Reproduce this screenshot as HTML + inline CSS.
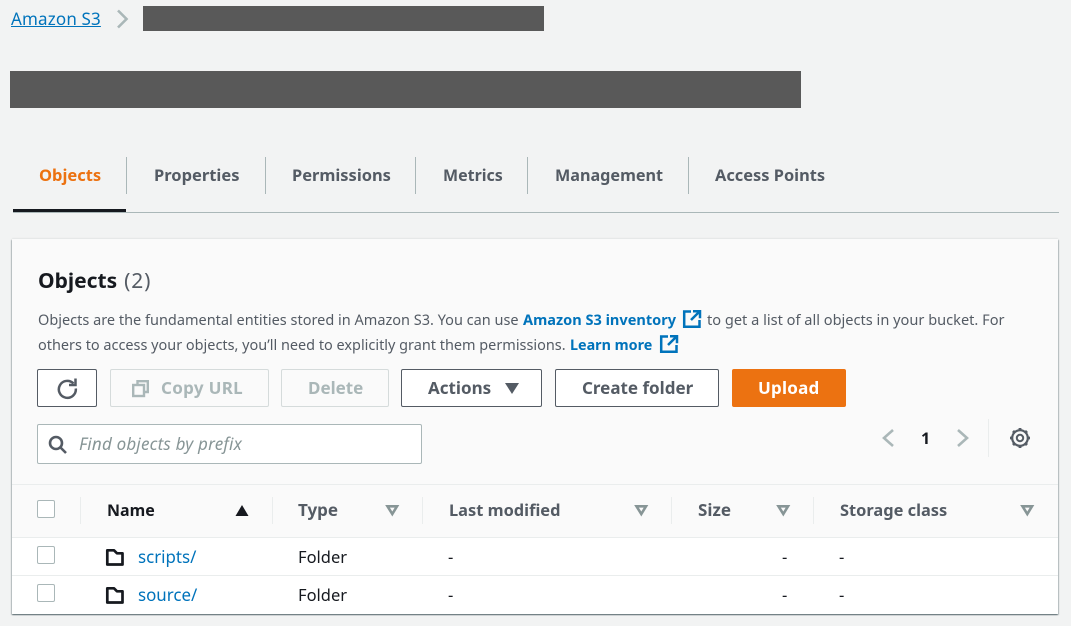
<!DOCTYPE html>
<html lang="en"><head><meta charset="utf-8"><title>Amazon S3</title>
<style>
html,body{margin:0;padding:0}
body{width:1071px;height:626px;background:#f2f3f3;position:relative;overflow:hidden;font-family:"Noto Sans","Open Sans","Liberation Sans","DejaVu Sans",sans-serif;font-size:14.5px;color:#16191f}
.a{position:absolute}
.t{position:absolute;white-space:nowrap;line-height:20px}
.tab{font-weight:700;font-size:16.5px;color:#545b64;top:165px}
.div{position:absolute;width:1px;background:#aab7b8;top:157px;height:37px}
.btn{position:absolute;top:369px;height:38px;box-sizing:border-box;border:1px solid #545b64;border-radius:2px;background:#fff}
.btn.dis{border-color:#d5dbdb;background:#fafafa}
.bl{position:absolute;top:378px;font-weight:700;font-size:17px;color:#545b64;white-space:nowrap;line-height:20px}
.cb{position:absolute;left:37px;width:18px;height:18px;box-sizing:border-box;border:1px solid #aab7b8;border-radius:2px;background:#fff}
.th{position:absolute;top:500px;font-weight:700;font-size:16.5px;color:#545b64;white-space:nowrap;line-height:20px}
.sep{position:absolute;top:497px;height:27px;width:1px;background:#eaeded}
.td{position:absolute;font-size:16.5px;white-space:nowrap;line-height:20px}
.lnk{color:#0073bb;font-size:16.9px}
svg{position:absolute;overflow:visible}
</style></head><body>
<a class="t" style="left:11px;top:9px;font-size:17px;letter-spacing:.15px;color:#0073bb;text-decoration:underline">Amazon S3</a>
<svg style="left:115px;top:9px" width="16" height="20"><path d="M3 1.500l8.500 8.500-8.500 8.500" fill="none" stroke="#aab7b8" stroke-width="2.600"/></svg>
<div class="a" style="left:143px;top:6px;width:401px;height:25px;background:#595959"></div>
<div class="a" style="left:10px;top:71px;width:791px;height:37px;background:#595959"></div>

<div class="t tab" style="left:39px;color:#ec7211">Objects</div>
<div class="t tab" style="left:154px">Properties</div>
<div class="t tab" style="left:292px;font-size:16.45px">Permissions</div>
<div class="t tab" style="left:443px;font-size:16px">Metrics</div>
<div class="t tab" style="left:555px;font-size:16.2px">Management</div>
<div class="t tab" style="left:715px;font-size:16.4px">Access Points</div>
<div class="div" style="left:126px"></div><div class="div" style="left:265px"></div><div class="div" style="left:415px"></div><div class="div" style="left:527px"></div><div class="div" style="left:688px"></div>
<div class="a" style="left:13px;top:209px;width:113px;height:3px;background:#16191f"></div>
<div class="a" style="left:13px;top:212px;width:1046px;height:1px;background:#aab7b8"></div>

<div class="a" style="left:12px;top:239px;width:1046px;height:375px;background:#fafafa;box-shadow:0 1px 1px 0 rgba(0,28,36,.4),1px 1px 1px 0 rgba(0,28,36,.2),-1px 1px 1px 0 rgba(0,28,36,.2),0 -1px 1px rgba(0,28,36,.06)"></div>
<div class="t" style="left:38px;top:269px;font-size:21px;line-height:25px;font-weight:700">Objects<span style="font-weight:400;color:#545b64;letter-spacing:.8px;margin-left:7px">(2)</span></div>
<div class="t" style="left:38px;top:310px;color:#545b64">Objects are the fundamental entities stored in Amazon S3. You can use</div>
<b class="t" style="left:523px;top:310px;color:#0073bb;font-size:14.55px">Amazon S3 inventory</b>
<svg style="left:683px;top:310px" width="18" height="18" fill="none" stroke="#0073bb" stroke-width="2.500"><path d="M8 1.500H1.200v15.300h15.300V10M10 1.200h7v7M16.800 1.200L8 10"/></svg>
<div class="t" style="left:707px;top:310px;color:#545b64;font-size:14.58px">to get a list of all objects in your bucket. For</div>
<div class="t" style="left:38px;top:336px;color:#545b64;font-size:14.46px">others to access your objects, you’ll need to explicitly grant them permissions.</div>
<b class="t" style="left:570px;top:336px;color:#0073bb;font-size:14.35px">Learn more</b>
<svg style="left:660px;top:335px" width="18" height="18" fill="none" stroke="#0073bb" stroke-width="2.500"><path d="M8 1.500H1.200v15.300h15.300V10M10 1.200h7v7M16.800 1.200L8 10"/></svg>

<div class="btn" style="left:37px;width:60px"></div>
<svg style="left:57px;top:378px" width="20" height="20" fill="none" stroke="#545b64" stroke-width="2.500"><path d="M16.500 5.500A8.500 8.500 0 1 0 18.800 10.500"/><path d="M18.500 .5v6.500h-6.500"/></svg>
<div class="btn dis" style="left:110px;width:159px"></div>
<svg style="left:132px;top:380px" width="17" height="17" fill="none" stroke="#aab7b8" stroke-width="2.400"><rect x="1.200" y="5" width="10.800" height="11"/><path d="M5.500 5V1.200h10.300v10.800H12"/></svg>
<div class="bl" style="left:161px;color:#aab7b8;letter-spacing:.3px">Copy URL</div>
<div class="btn dis" style="left:281px;width:108px"></div>
<div class="bl" style="left:308px;color:#aab7b8">Delete</div>
<div class="btn" style="left:401px;width:141px"></div>
<div class="bl" style="left:428px">Actions</div>
<svg style="left:505px;top:383px" width="14" height="11"><path d="M0 0h14L7 11z" fill="#545b64"/></svg>
<div class="btn" style="left:555px;width:164px"></div>
<div class="bl" style="left:582px">Create folder</div>
<div class="btn" style="left:732px;width:114px;background:#ec7211;border-color:#ec7211"></div>
<div class="bl" style="left:758px;color:#fff;letter-spacing:.2px">Upload</div>

<div class="a" style="left:37px;top:424px;width:385px;height:40px;box-sizing:border-box;border:1px solid #aab7b8;border-radius:2px;background:#fff"></div>
<svg style="left:48px;top:435px" width="19" height="19" fill="none" stroke="#545b64" stroke-width="2.600"><circle cx="8" cy="8" r="6"/><path d="M12.500 12.500L18 18"/></svg>
<div class="t" style="left:79px;top:434px;font-size:17px;font-style:italic;color:#879596;letter-spacing:.2px">Find objects by prefix</div>

<svg style="left:881px;top:429px" width="14" height="18" fill="none" stroke="#aab7b8" stroke-width="2.600"><path d="M12 1L3 9l9 8"/></svg>
<div class="t" style="left:921px;top:428px;font-size:16px;font-weight:700">1</div>
<svg style="left:956px;top:429px" width="14" height="18" fill="none" stroke="#aab7b8" stroke-width="2.600"><path d="M2 1l9 8-9 8"/></svg>
<div class="a" style="left:988px;top:419px;width:1px;height:38px;background:#eaeded"></div>
<svg style="left:1010px;top:428px" width="20" height="20" viewBox="0 0 20 20" fill="none" stroke="#545b64"><circle cx="10" cy="10" r="3.200" stroke-width="2"/><circle cx="10" cy="10" r="7.800" stroke-width="2.200"/><path stroke-width="2.800" d="M10 0v2.500M10 17.500V20M0 10h2.500M17.500 10H20M3 3l1.800 1.800M15.200 15.200L17 17M3 17l1.800-1.800M15.200 4.800L17 3"/></svg>

<div class="a" style="left:12px;top:484px;width:1046px;height:1px;background:#eaeded"></div>
<div class="a" style="left:12px;top:537px;width:1046px;height:77px;background:#fff;border-top:1px solid #eaeded;box-sizing:border-box"></div>
<div class="a" style="left:12px;top:575px;width:1046px;height:1px;background:#eaeded"></div>

<div class="cb" style="top:500px"></div><div class="cb" style="top:546px"></div><div class="cb" style="top:584px"></div>
<div class="sep" style="left:80px"></div><div class="sep" style="left:272px"></div><div class="sep" style="left:422px"></div><div class="sep" style="left:671px"></div><div class="sep" style="left:813px"></div>

<div class="th" style="left:107px;color:#16191f;font-size:16px">Name</div>
<svg style="left:235px;top:505px" width="14" height="11"><path d="M7 0l6.500 11H.5z" fill="#16191f"/></svg>
<div class="th" style="left:298px;font-size:17px">Type</div>
<div class="th" style="left:449px;font-size:16.4px">Last modified</div>
<div class="th" style="left:698px;font-size:17px">Size</div>
<div class="th" style="left:840px;font-size:16.4px">Storage class</div>
<svg style="left:386px;top:505px" width="13" height="11" fill="none" stroke="#879596" stroke-width="2.600"><path d="M1.500 1.300h9.500L6.300 9z"/></svg>
<svg style="left:635px;top:505px" width="13" height="11" fill="none" stroke="#879596" stroke-width="2.600"><path d="M1.500 1.300h9.500L6.300 9z"/></svg>
<svg style="left:777px;top:505px" width="13" height="11" fill="none" stroke="#879596" stroke-width="2.600"><path d="M1.500 1.300h9.500L6.300 9z"/></svg>
<svg style="left:1021px;top:505px" width="13" height="11" fill="none" stroke="#879596" stroke-width="2.600"><path d="M1.500 1.300h9.500L6.300 9z"/></svg>

<svg style="left:106px;top:549px" width="18" height="17" fill="none" stroke="#16191f" stroke-width="2.700"><path d="M1.300 1.300h6.700l3 3h5.500v11.200H1.300z" stroke-linejoin="round"/></svg>
<div class="td lnk" style="left:138px;top:547px">scripts/</div>
<div class="td" style="left:298px;top:547px">Folder</div>
<div class="td" style="left:448px;top:547px">-</div>
<div class="td" style="left:782px;top:547px">-</div>
<div class="td" style="left:839px;top:547px">-</div>

<svg style="left:106px;top:587px" width="18" height="17" fill="none" stroke="#16191f" stroke-width="2.700"><path d="M1.300 1.300h6.700l3 3h5.500v11.200H1.300z" stroke-linejoin="round"/></svg>
<div class="td lnk" style="left:138px;top:585px">source/</div>
<div class="td" style="left:298px;top:585px">Folder</div>
<div class="td" style="left:448px;top:585px">-</div>
<div class="td" style="left:782px;top:585px">-</div>
<div class="td" style="left:839px;top:585px">-</div>
</body></html>
